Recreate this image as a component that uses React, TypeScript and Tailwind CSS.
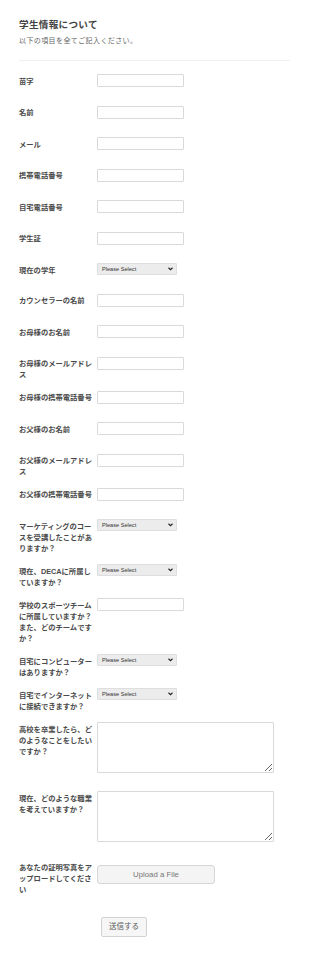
import React from 'react'

type Kind = 'input' | 'select' | 'textarea' | 'upload'

const fields: { label: string; kind: Kind }[] = [
  { label: '苗字', kind: 'input' },
  { label: '名前', kind: 'input' },
  { label: 'メール', kind: 'input' },
  { label: '携帯電話番号', kind: 'input' },
  { label: '自宅電話番号', kind: 'input' },
  { label: '学生証', kind: 'input' },
  { label: '現在の学年', kind: 'select' },
  { label: 'カウンセラーの名前', kind: 'input' },
  { label: 'お母様のお名前', kind: 'input' },
  { label: 'お母様のメールアドレス', kind: 'input' },
  { label: 'お母様の携帯電話番号', kind: 'input' },
  { label: 'お父様のお名前', kind: 'input' },
  { label: 'お父様のメールアドレス', kind: 'input' },
  { label: 'お父様の携帯電話番号', kind: 'input' },
  { label: 'マーケティングのコースを受講したことがありますか？', kind: 'select' },
  { label: '現在、DECAに所属していますか？', kind: 'select' },
  { label: '学校のスポーツチームに所属していますか？また、どのチームですか？', kind: 'input' },
  { label: '自宅にコンピューターはありますか？', kind: 'select' },
  { label: '自宅でインターネットに接続できますか？', kind: 'select' },
  { label: '高校を卒業したら、どのようなことをしたいですか？', kind: 'textarea' },
  { label: '現在、どのような職業を考えていますか？', kind: 'textarea' },
  { label: 'あなたの証明写真をアップロードしてください', kind: 'upload' },
]

function Control({ kind }: { kind: Kind }) {
  if (kind === 'input')
    return (
      <div className="pb-[13.5px]">
        <input className="block w-[87px] h-[13px] border border-[#d9d9d9] rounded-[1px] bg-white outline-none" />
      </div>
    )
  if (kind === 'select')
    return (
      <div className="pb-[13.5px]">
        <div className="flex items-center justify-between w-[80px] h-[12px] pl-[4px] pr-[3px] bg-[#ececec] border border-[#dedede] rounded-[1px] font-['Liberation_Sans',sans-serif] text-[5.6px] text-[#333]">
          <span>Please Select</span>
          <svg width="5" height="4" viewBox="0 0 10 8">
            <path d="M1 1.5 L5 5.5 L9 1.5" fill="none" stroke="#222" strokeWidth="2.2" />
          </svg>
        </div>
      </div>
    )
  if (kind === 'textarea')
    return (
      <div className="pb-[13px]">
        <textarea className="block w-[177px] h-[51px] border border-[#d9d9d9] rounded-[1px] bg-white outline-none resize" />
      </div>
    )
  return (
    <div>
      <button className="w-[118px] h-[19px] bg-[#f4f4f4] border border-[#d6d6d6] rounded-[3px] font-['Liberation_Sans',sans-serif] text-[7.8px] text-[#777]">
        Upload a File
      </button>
    </div>
  )
}

export default function App() {
  return (
    <div className="min-h-screen bg-white font-['Liberation_Sans','Noto_Sans_CJK_JP',sans-serif]">
      <div className="px-[19px] pt-[19px] pb-[20px]">
        <h1 className="text-[9.6px] leading-[12px] font-bold text-[#444] tracking-[0.3px]">学生情報について</h1>
        <p className="mt-[5px] text-[7px] leading-[10px] text-[#666] tracking-[0.4px]">以下の項目を全てご記入ください。</p>
        <div className="mt-[14px] h-px bg-[#f0f0f0] w-[271px]" />

        <div className="mt-[8px]">
          {fields.map(f => (
            <div key={f.label} className="flex items-start pt-[5px]">
              <label className="w-[78px] shrink-0 pt-[1.5px] pb-[5.5px] pr-[3px] text-[7.3px] leading-[11px] font-bold text-[#4a4a4a] break-all">
                {f.label}
              </label>
              <Control kind={f.kind} />
            </div>
          ))}
        </div>

        <div className="mt-[12px] ml-[82px]">
          <button className="w-[46px] h-[20px] bg-[#f6f6f6] border border-[#d2d2d2] rounded-[2px] text-[7.5px] text-[#555]">
            送信する
          </button>
        </div>
      </div>
    </div>
  )
}
